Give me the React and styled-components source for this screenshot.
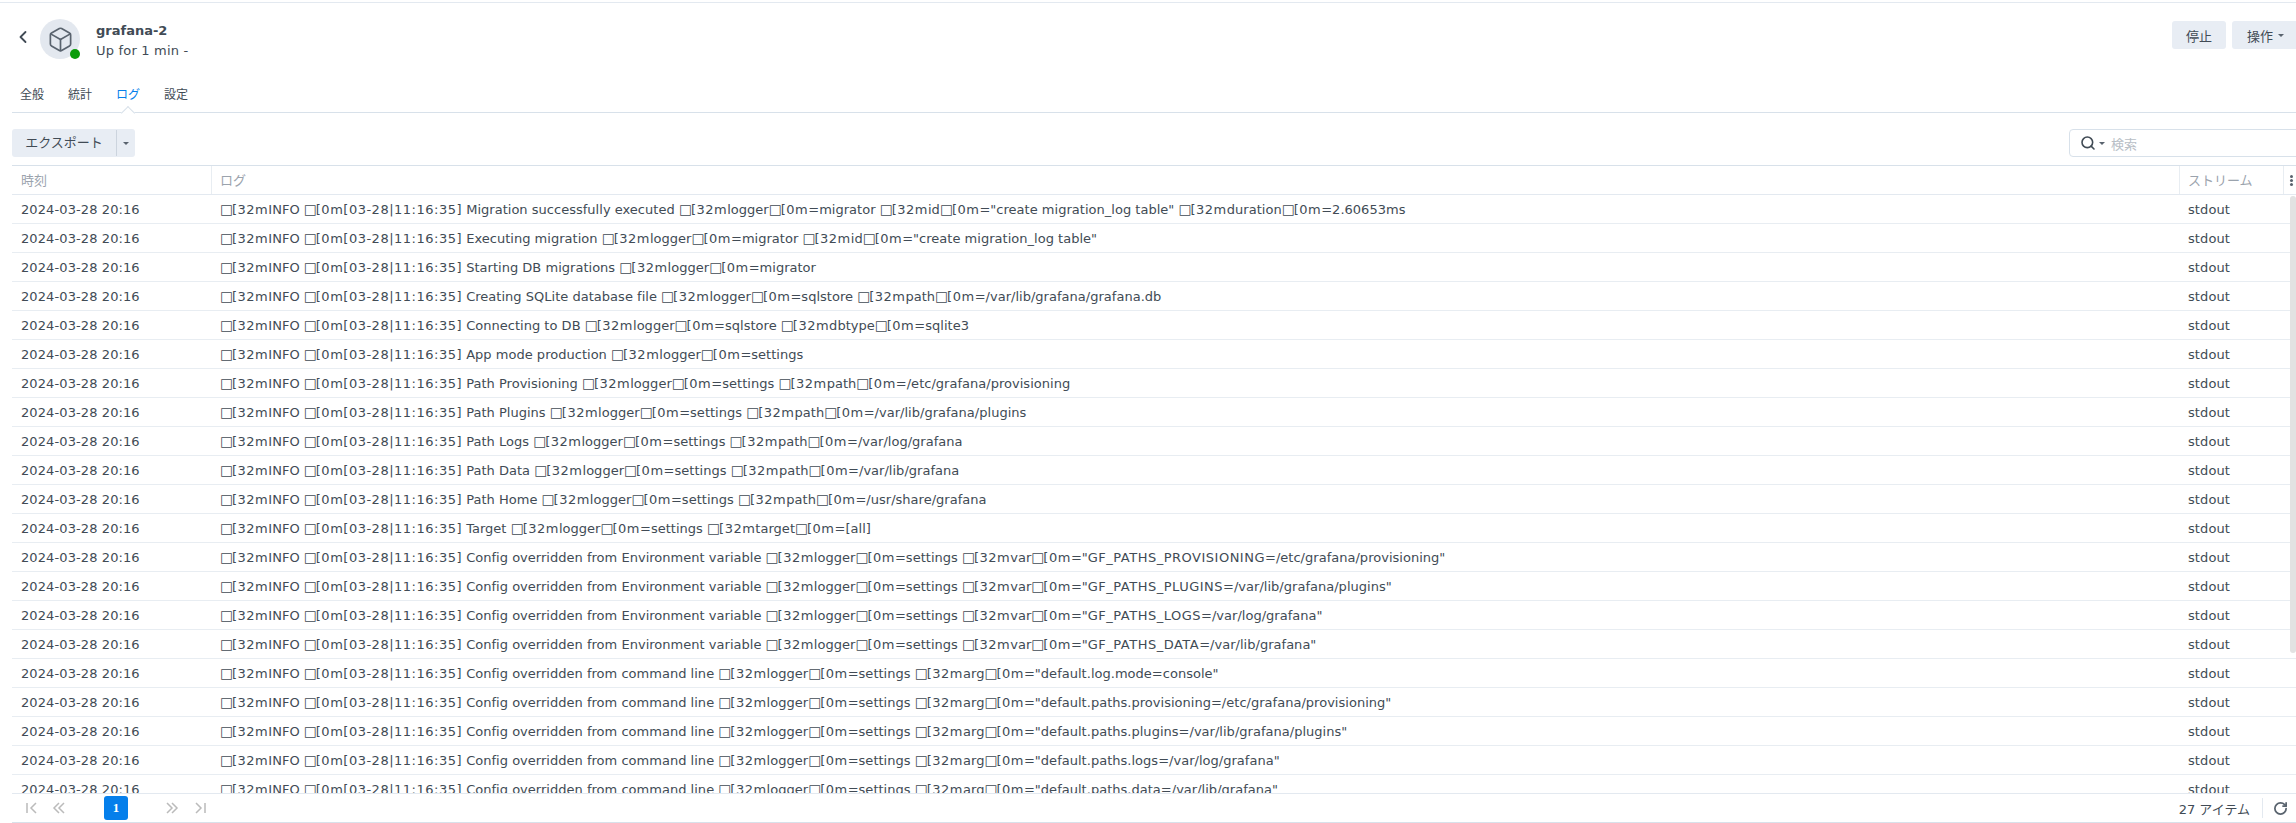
import React from 'react';
import styled, { createGlobalStyle } from 'styled-components';
import { ChevronLeft, Box, Search, RotateCw } from 'lucide-react';

const GlobalStyle = createGlobalStyle`
  html, body { margin: 0; padding: 0; height: 100%; overflow: hidden; background: #fff; }
  body { font-family: "DejaVu Sans", "Noto Sans CJK JP", sans-serif; font-size: 13px; color: #414b55; }
  * { box-sizing: border-box; }
`;

const Page = styled.div`
  width: 2296px;
  height: 821px;
  overflow: hidden;
  display: flex;
  flex-direction: column;
  border-top: 1px solid #e3e9f0;
  margin-top: 2px;
  padding-left: 12px;
`;

const Header = styled.div`
  height: 61px;
  display: flex;
  align-items: flex-start;
  padding-top: 16px;
  flex: none;
`;

const BackButton = styled.button`
  width: 28px;
  height: 40px;
  border: none;
  background: none;
  padding: 0 6px 4px 0;
  color: #414b55;
  display: flex;
  align-items: center;
  justify-content: center;
`;

const Avatar = styled.div`
  position: relative;
  width: 40px;
  height: 40px;
  border-radius: 50%;
  background: #e3e8ef;
  color: #59636e;
  display: flex;
  align-items: center;
  justify-content: center;
  flex: none;
`;

const StatusDot = styled.span`
  position: absolute;
  right: 0;
  bottom: 0;
  width: 10px;
  height: 10px;
  border-radius: 50%;
  background: #0a9c0a;
`;

const Titles = styled.div`
  margin-left: 16px;
  display: flex;
  flex-direction: column;
  gap: 5px;
  padding-top: 4px;
`;

const Title = styled.div`
  font-weight: 700;
  font-size: 13px;
  line-height: 15px;
`;

const Subtitle = styled.div`
  font-size: 13px;
  line-height: 15px;
  letter-spacing: 0.2px;
`;

const HeaderActions = styled.div`
  margin-left: auto;
  display: flex;
  gap: 6px;
  margin-top: 2px;
  margin-right: -10px;
`;

const ActionButton = styled.button`
  height: 28px;
  width: ${({ $w }) => $w}px;
  border: none;
  border-radius: 3px;
  background: #e8edf4;
  color: #414b55;
  font: inherit;
  font-size: 13px;
  display: flex;
  align-items: center;
  justify-content: center;
  gap: 5px;
  padding: 0 ${({ $pr }) => $pr || 0}px 0 0;
`;

const Caret = styled.span`
  width: 0;
  height: 0;
  border-left: 3px solid transparent;
  border-right: 3px solid transparent;
  border-top: 3px solid #59636e;
`;

const Tabs = styled.div`
  height: 49px;
  display: flex;
  align-items: flex-start;
  gap: 24px;
  padding: 22px 0 0 8px;
  border-bottom: 1px solid #d8e1ea;
  flex: none;
  position: relative;
`;

const Tab = styled.div`
  position: relative;
  font-size: 12px;
  line-height: 18px;
  color: ${({ $active }) => ($active ? '#057feb' : '#414b55')};
  ${({ $active }) =>
    $active &&
    `&::after {
      content: '';
      position: absolute;
      left: 50%;
      top: 22px;
      width: 9px;
      height: 9px;
      margin-left: -5px;
      background: #fff;
      border-left: 1px solid #d8e1ea;
      border-top: 1px solid #d8e1ea;
      transform: rotate(45deg);
    }`}
`;

const Toolbar = styled.div`
  height: 52px;
  display: flex;
  align-items: flex-start;
  justify-content: space-between;
  padding-top: 16px;
  flex: none;
`;

const SplitButton = styled.div`
  display: flex;
  height: 28px;
  border-radius: 3px;
  background: #e8edf4;
  overflow: hidden;
  align-items: center;
`;

const SplitLabel = styled.div`
  width: 105px;
  height: 26px;
  line-height: 26px;
  text-align: center;
  font-size: 13px;
  border-right: 1px solid #ccd4de;
`;

const SplitArrow = styled.div`
  width: 18px;
  display: flex;
  justify-content: center;
`;

const SearchBox = styled.div`
  width: 240px;
  height: 28px;
  border: 1px solid #d8e1ea;
  border-radius: 4px 0 0 4px;
  display: flex;
  align-items: center;
  padding-left: 10px;
  gap: 3px;
  color: #414b55;
  font-size: 13px;
  margin-right: -13px;
`;

const Placeholder = styled.span`
  color: #b8bec6;
  margin-left: 3px;
`;

const Table = styled.div`
  flex: 1;
  min-height: 0;
  position: relative;
  display: flex;
  flex-direction: column;
  border-top: 1px solid #d8e1ea;
`;

const Columns = styled.div`
  display: grid;
  grid-template-columns: 199px 1968px 104px 12px;
  flex: none;
`;

const HeadRow = styled(Columns)`
  height: 29px;
  border-bottom: 1px solid #e3e9f0;
`;

const HeadCell = styled.div`
  color: #9ba3ad;
  font-size: 13px;
  line-height: 29px;
  padding-left: ${({ $first }) => ($first ? 9 : 8)}px;
  border-left: ${({ $first }) => ($first ? 'none' : '1px solid #e8edf2')};
  white-space: nowrap;
  overflow: hidden;
`;

const MoreDots = styled.span`
  display: block;
  width: 3px;
  height: 3px;
  margin: 9px 0 0 -2px;
  background: #59636e;
  border-radius: 50%;
  box-shadow: 0 4px 0 #59636e, 0 8px 0 #59636e;
`;

const Body = styled.div`
  flex: 1;
  min-height: 0;
  overflow: hidden;
`;

const Row = styled(Columns)`
  height: 29px;
  border-bottom: 1px solid #e8edf2;
`;

const Cell = styled.div`
  line-height: 29px;
  padding-left: 9px;
  white-space: nowrap;
  overflow: hidden;
  letter-spacing: 0.1px;
`;

const LogCell = styled(Cell)`
  letter-spacing: 0.02px;
`;

const Esc = styled.span`
  display: inline-block;
  width: 12px;
  font-size: 13.5px;
  letter-spacing: 0;
`;

const Code = styled.span`
  letter-spacing: 0.5px;
`;

const Scrollbar = styled.div`
  position: absolute;
  right: 0;
  top: 30px;
  width: 6px;
  height: 457px;
  border-radius: 3px;
  background: #e2e2e2;
`;

const Footer = styled.div`
  height: 30px;
  flex: none;
  display: flex;
  align-items: center;
  border-top: 1px solid #e3e9f0;
  border-bottom: 1px solid #d8e1ea;
  padding-left: 13px;
  color: #bbbbbb;
`;

const PagerIcon = styled.svg`
  width: 14px;
  height: 14px;
  margin-right: ${({ $gap }) => $gap}px;
  fill: none;
  stroke: currentColor;
  stroke-width: 1.5;
  flex: none;
`;

const PageNumber = styled.div`
  width: 24px;
  height: 24px;
  border-radius: 3px;
  background: #057feb;
  color: #fff;
  font-family: "Liberation Serif", serif;
  font-weight: 700;
  font-size: 13px;
  display: flex;
  align-items: center;
  justify-content: center;
  margin-right: 37px;
`;

const FooterRight = styled.div`
  margin-left: auto;
  display: flex;
  align-items: center;
  color: #414b55;
  font-size: 13px;
`;

const RefreshWrap = styled.div`
  margin-left: 12px;
  padding: 0 8px 0 10px;
  border-left: 1px solid #e3e9f0;
  height: 20px;
  display: flex;
  align-items: center;
  color: #59636e;
`;

const PRE = '□[32mINFO □[0m[03-28|11:16:35] ';
const CFG = (tail) => `□[32mlogger□[0m=settings ${tail}`;

const LOG_LINES = [
  'Migration successfully executed □[32mlogger□[0m=migrator □[32mid□[0m="create migration_log table" □[32mduration□[0m=2.60653ms',
  'Executing migration □[32mlogger□[0m=migrator □[32mid□[0m="create migration_log table"',
  'Starting DB migrations □[32mlogger□[0m=migrator',
  'Creating SQLite database file □[32mlogger□[0m=sqlstore □[32mpath□[0m=/var/lib/grafana/grafana.db',
  'Connecting to DB □[32mlogger□[0m=sqlstore □[32mdbtype□[0m=sqlite3',
  'App mode production □[32mlogger□[0m=settings',
  'Path Provisioning ' + CFG('□[32mpath□[0m=/etc/grafana/provisioning'),
  'Path Plugins ' + CFG('□[32mpath□[0m=/var/lib/grafana/plugins'),
  'Path Logs ' + CFG('□[32mpath□[0m=/var/log/grafana'),
  'Path Data ' + CFG('□[32mpath□[0m=/var/lib/grafana'),
  'Path Home ' + CFG('□[32mpath□[0m=/usr/share/grafana'),
  'Target ' + CFG('□[32mtarget□[0m=[all]'),
  'Config overridden from Environment variable ' + CFG('□[32mvar□[0m="GF_PATHS_PROVISIONING=/etc/grafana/provisioning"'),
  'Config overridden from Environment variable ' + CFG('□[32mvar□[0m="GF_PATHS_PLUGINS=/var/lib/grafana/plugins"'),
  'Config overridden from Environment variable ' + CFG('□[32mvar□[0m="GF_PATHS_LOGS=/var/log/grafana"'),
  'Config overridden from Environment variable ' + CFG('□[32mvar□[0m="GF_PATHS_DATA=/var/lib/grafana"'),
  'Config overridden from command line ' + CFG('□[32marg□[0m="default.log.mode=console"'),
  'Config overridden from command line ' + CFG('□[32marg□[0m="default.paths.provisioning=/etc/grafana/provisioning"'),
  'Config overridden from command line ' + CFG('□[32marg□[0m="default.paths.plugins=/var/lib/grafana/plugins"'),
  'Config overridden from command line ' + CFG('□[32marg□[0m="default.paths.logs=/var/log/grafana"'),
  'Config overridden from command line ' + CFG('□[32marg□[0m="default.paths.data=/var/lib/grafana"'),
];

// ansi codes, the timestamp and env names run wider than the words around them
function LogText({ text }) {
  return text.split(/(□\[\d+m|\[03-28\|11:16:35\]|GF_PATHS_[A-Z]+)/).map((part, i) => {
    if (i % 2 === 0) return part;
    if (part[0] === '□') {
      return (
        <React.Fragment key={i}>
          <Esc>□</Esc>
          <Code>{part.slice(1)}</Code>
        </React.Fragment>
      );
    }
    return <Code key={i}>{part}</Code>;
  });
}

const PagerGlyph = ({ d, gap }) => (
  <PagerIcon viewBox="0 0 14 14" $gap={gap}>
    <path d={d} />
  </PagerIcon>
);

export default function App() {
  return (
    <Page>
      <GlobalStyle />
      <Header>
        <BackButton><ChevronLeft size={20} strokeWidth={2.2} /></BackButton>
        <Avatar>
          <Box size={27} strokeWidth={1.5} />
          <StatusDot />
        </Avatar>
        <Titles>
          <Title>grafana-2</Title>
          <Subtitle>Up for 1 min -</Subtitle>
        </Titles>
        <HeaderActions>
          <ActionButton $w={54}>停止</ActionButton>
          <ActionButton $w={74} $pr={7}>操作 <Caret /></ActionButton>
        </HeaderActions>
      </Header>
      <Tabs>
        <Tab>全般</Tab>
        <Tab>統計</Tab>
        <Tab $active>ログ</Tab>
        <Tab>設定</Tab>
      </Tabs>
      <Toolbar>
        <SplitButton>
          <SplitLabel>エクスポート</SplitLabel>
          <SplitArrow><Caret /></SplitArrow>
        </SplitButton>
        <SearchBox>
          <Search size={16} strokeWidth={2.4} />
          <Caret />
          <Placeholder>検索</Placeholder>
        </SearchBox>
      </Toolbar>
      <Table>
        <HeadRow>
          <HeadCell $first>時刻</HeadCell>
          <HeadCell>ログ</HeadCell>
          <HeadCell>ストリーム</HeadCell>
          <HeadCell><MoreDots /></HeadCell>
        </HeadRow>
        <Body>
          {LOG_LINES.map((line, i) => (
            <Row key={i}>
              <Cell>2024-03-28 20:16</Cell>
              <LogCell><LogText text={PRE + line} /></LogCell>
              <Cell>stdout</Cell>
            </Row>
          ))}
        </Body>
        <Scrollbar />
      </Table>
      <Footer>
        <PagerGlyph d="M2 2v10M11 2L6 7l5 5" gap={13} />
        <PagerGlyph d="M7 2L2 7l5 5M12 2L7 7l5 5" gap={38} />
        <PageNumber>1</PageNumber>
        <PagerGlyph d="M2 2l5 5-5 5M7 2l5 5-5 5" gap={14} />
        <PagerGlyph d="M3 2l5 5-5 5M12 2v10" gap={0} />
        <FooterRight>
          27 アイテム
          <RefreshWrap><RotateCw size={15} strokeWidth={2.8} /></RefreshWrap>
        </FooterRight>
      </Footer>
    </Page>
  );
}
